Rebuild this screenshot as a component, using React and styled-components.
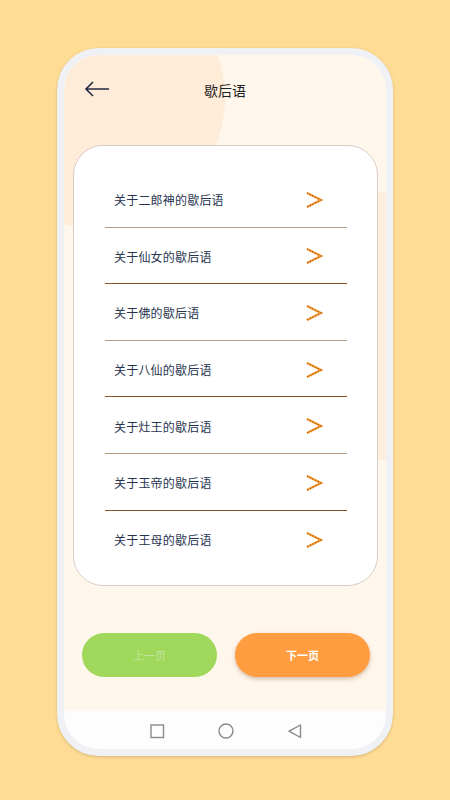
import React from 'react';
import styled, { createGlobalStyle } from 'styled-components';

const GlobalStyle = createGlobalStyle`
  html, body {
    margin: 0;
    padding: 0;
    background: #ffdc93;
    font-family: "Noto Sans CJK SC", "Noto Sans", sans-serif;
  }
`;

const Page = styled.div`
  width: 450px;
  height: 800px;
  padding-top: 48px;
  box-sizing: border-box;
  display: flex;
  justify-content: center;
  align-items: flex-start;
`;

const Phone = styled.div`
  width: 336px;
  height: 708px;
  box-sizing: border-box;
  border: 7px solid #eff1f4;
  border-radius: 42px;
  box-shadow: 0 1px 3px rgba(0, 0, 0, 0.18);
  overflow: hidden;
  background: #fff;
`;

const Screen = styled.div`
  position: relative;
  height: 100%;
  background: #fff6ec;
  display: flex;
  flex-direction: column;
  overflow: hidden;
  border-radius: 34px;
`;

const Blob = styled.div`
  position: absolute;
  left: -99px;
  top: -87px;
  width: 260px;
  height: 260px;
  border-radius: 50%;
  background: #ffecd8;
`;

const SideStrip = styled.div`
  position: absolute;
  right: 0;
  top: 137px;
  width: 12px;
  height: 268px;
  background: #ffeedd;
`;

const Header = styled.div`
  position: relative;
  height: 69px;
  display: flex;
  align-items: center;
  justify-content: center;
  flex-shrink: 0;
`;

const Back = styled.div`
  position: absolute;
  left: 20px;
  top: 25px;
  width: 26px;
  height: 18px;
  display: flex;
`;

const Title = styled.div`
  font-size: 14px;
  color: #1f1f1f;
  margin-top: 1px;
`;

const Card = styled.div`
  position: relative;
  margin: 21px 8px 0 9px;
  height: 441px;
  box-sizing: border-box;
  background: #fff;
  border: 1px solid #d8cdc6;
  border-radius: 30px;
  padding: 25px 30px 0 31px;
`;

const Row = styled.div`
  height: 56.6px;
  box-sizing: border-box;
  display: flex;
  align-items: center;
  justify-content: space-between;
  padding: 2px 24px 0 9px;
  border-bottom: ${(p) => (p.$last ? 'none' : `1.5px solid ${p.$color}`)};
`;

const RowText = styled.span`
  font-size: 12px;
  color: #28344f;
  letter-spacing: 0.2px;
`;

const Buttons = styled.div`
  display: flex;
  gap: 18px;
  padding: 47px 16px 0 18px;
`;

const Button = styled.div`
  flex: 1;
  height: 44px;
  border-radius: 22px;
  display: flex;
  align-items: center;
  justify-content: center;
  font-size: 11px;
  font-weight: ${(p) => (p.$primary ? 700 : 400)};
  color: ${(p) => (p.$primary ? '#ffffff' : '#c4e4a0')};
  background: ${(p) => (p.$primary ? '#ff9d40' : '#9fd85a')};
  box-shadow: ${(p) => (p.$primary ? '0 2px 4px rgba(120, 70, 20, 0.3)' : 'none')};
`;

const Spacer = styled.div`
  flex: 1;
`;

const NavBar = styled.div`
  height: 37px;
  flex-shrink: 0;
  background: #fdfdfd;
  display: flex;
  align-items: center;
  justify-content: center;
  gap: 53px;
  padding: 1px 0 0 2px;
`;

const NavIcon = styled.svg`
  width: 16px;
  height: 16px;
  display: block;
`;

const Chevron = () => (
  <svg width="18" height="18" viewBox="0 0 18 18">
    <polyline
      points="2,2 16,9 2,16"
      fill="none"
      stroke="#f59a2e"
      strokeWidth="2.2"
      strokeLinejoin="miter"
    />
    <polyline
      points="2,2 16,9 2,16"
      fill="none"
      stroke="#a9541a"
      strokeWidth="1.3"
      strokeDasharray="1 2"
    />
  </svg>
);

const items = [
  '关于二郎神的歇后语',
  '关于仙女的歇后语',
  '关于佛的歇后语',
  '关于八仙的歇后语',
  '关于灶王的歇后语',
  '关于玉帝的歇后语',
  '关于王母的歇后语',
];

export default function App() {
  return (
    <>
      <GlobalStyle />
      <Page>
        <Phone>
          <Screen>
            <Blob />
            <SideStrip />
            <Header>
              <Back>
                <svg width="26" height="18" viewBox="0 0 26 18">
                  <path d="M25 9H2M9 2L2 9l7 7" fill="none" stroke="#222a3f" strokeWidth="1.6" />
                </svg>
              </Back>
              <Title>歇后语</Title>
            </Header>
            <Card>
              {items.map((t, i) => (
                <Row key={t} $last={i === items.length - 1} $color={i % 2 === 0 ? '#b49b7e' : '#84532a'}>
                  <RowText>{t}</RowText>
                  <Chevron />
                </Row>
              ))}
            </Card>
            <Buttons>
              <Button>上一页</Button>
              <Button $primary>下一页</Button>
            </Buttons>
            <Spacer />
            <NavBar>
              <NavIcon viewBox="0 0 16 16">
                <rect x="2" y="2" width="12.5" height="12.5" fill="none" stroke="#8a8a8a" strokeWidth="1.4" />
              </NavIcon>
              <NavIcon viewBox="0 0 16 16">
                <circle cx="8" cy="8" r="7" fill="none" stroke="#8a8a8a" strokeWidth="1.4" />
              </NavIcon>
              <NavIcon viewBox="0 0 16 16">
                <path d="M13.5 2v12.5L2 8.2z" fill="none" stroke="#8a8a8a" strokeWidth="1.4" strokeLinejoin="round" />
              </NavIcon>
            </NavBar>
          </Screen>
        </Phone>
      </Page>
    </>
  );
}
